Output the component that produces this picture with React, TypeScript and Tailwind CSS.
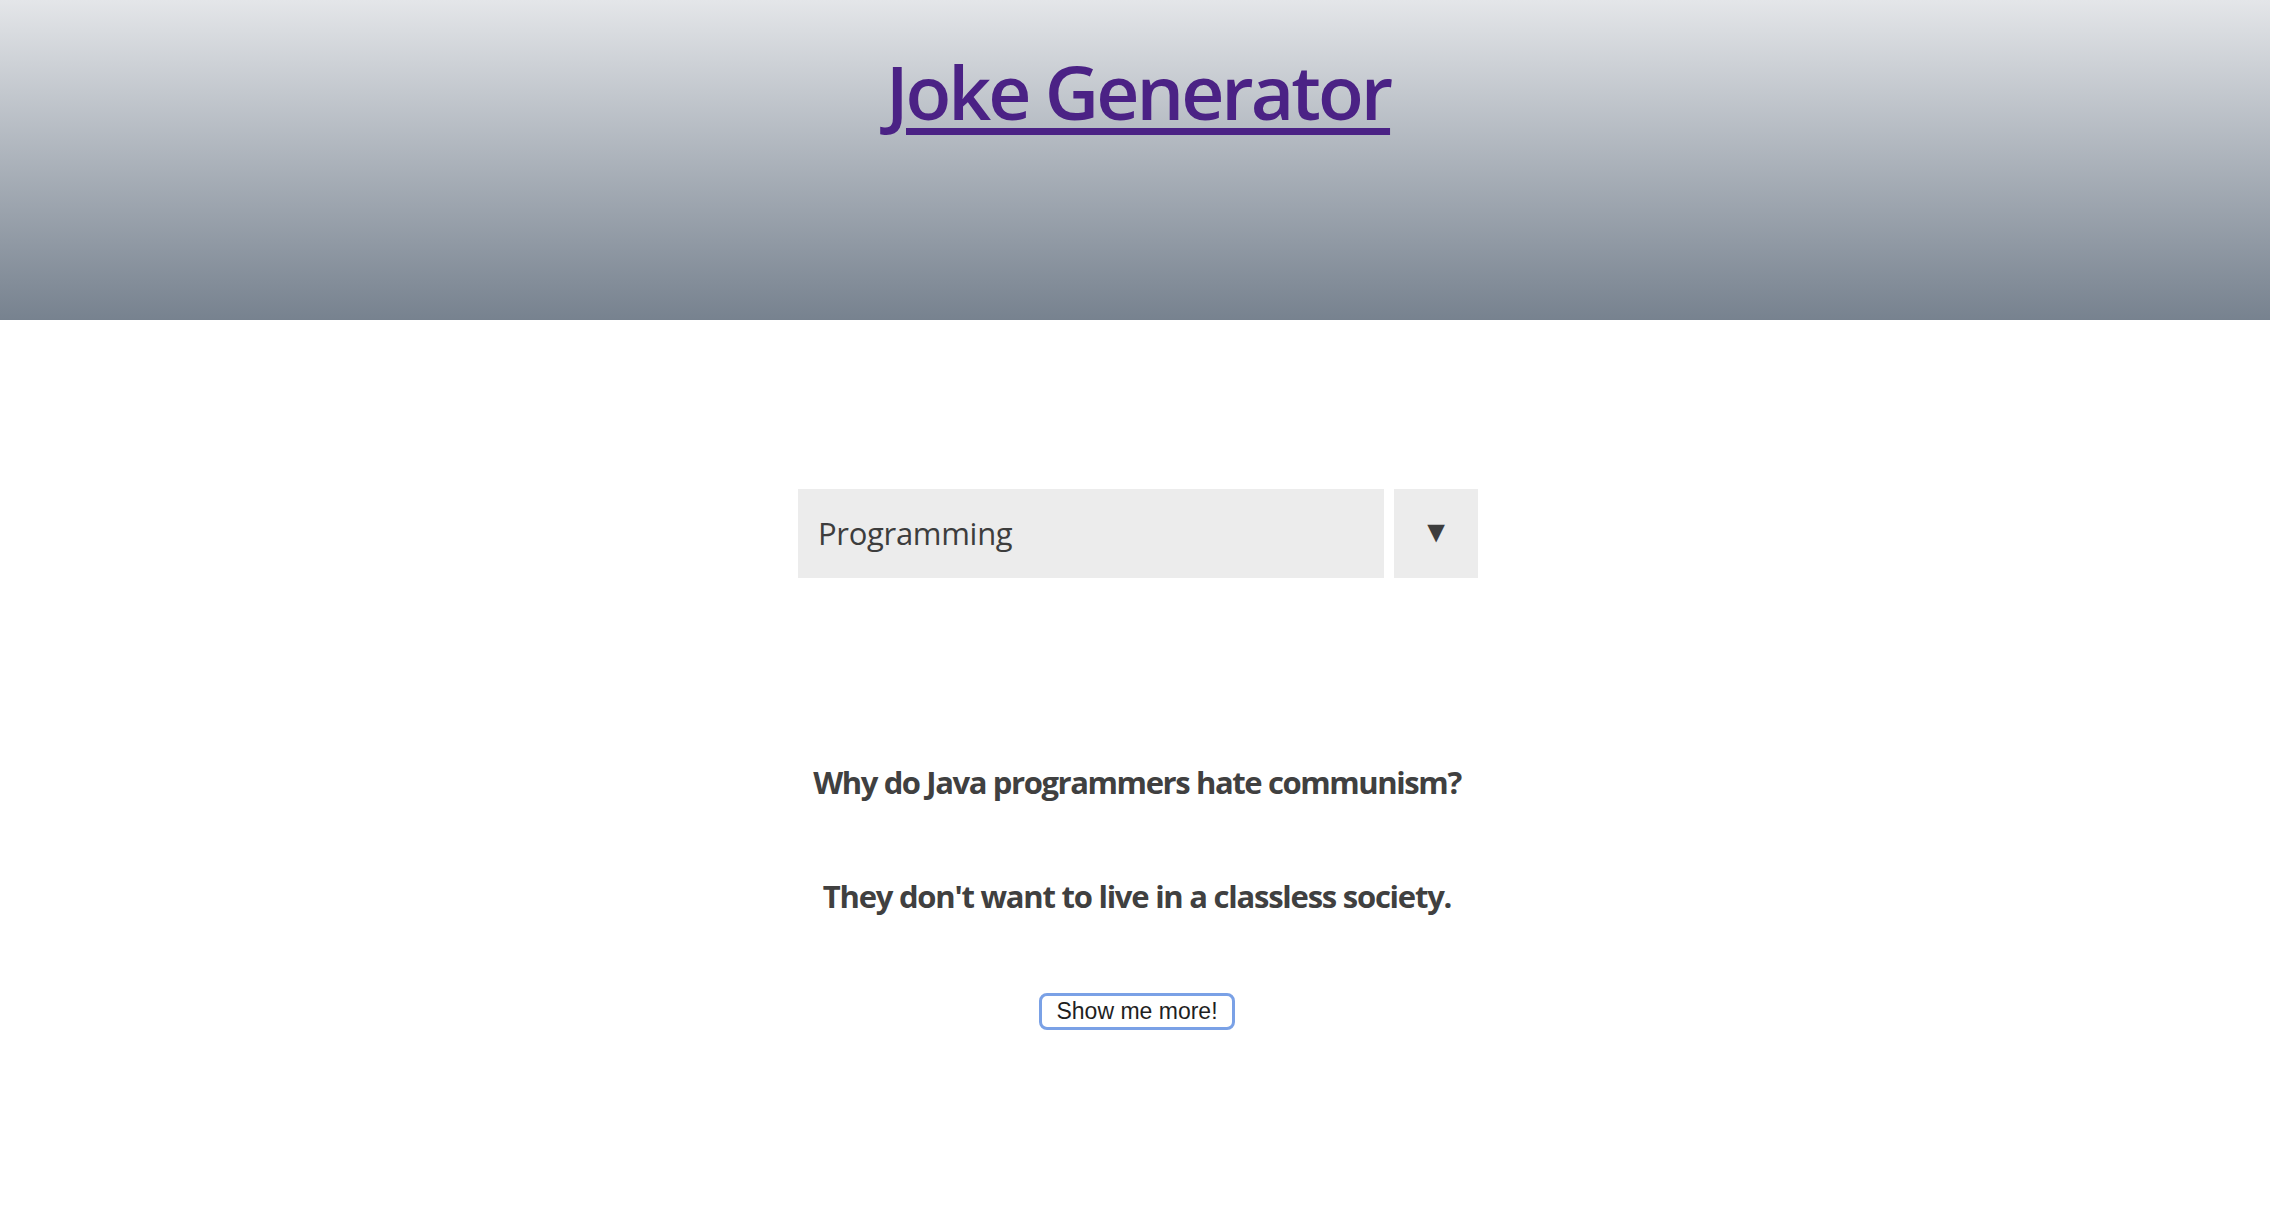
import React from "react";

export default function App() {
  return (
    <div className="min-h-screen bg-white" style={{ fontFamily: '"Open Sans", "Noto Sans", sans-serif' }}>
      <header className="h-[320px] bg-gradient-to-b from-[#e4e6e9] to-[#77828f] flex justify-center">
        <h1 className="mt-[54px] ml-[6px] text-[75px] leading-none font-semibold tracking-[-0.04em] text-[#4b2285] underline decoration-[7px] underline-offset-[8px]">
          Joke Generator
        </h1>
      </header>

      <main className="flex flex-col items-center">
        <div className="mt-[169px] ml-[6px] flex gap-[10px]">
          <div className="w-[586px] h-[89px] bg-[#ececec] flex items-center pl-[20px] text-[31px] text-[#3d3d3d] tracking-[-0.01em]">
            Programming
          </div>
          <div className="w-[84px] h-[89px] bg-[#ececec] flex items-center justify-center pb-[6px] text-[30px] text-[#3d3d3d]">
            ▼
          </div>
        </div>

        <p className="mt-[182px] ml-[4px] text-[31px] leading-[44px] font-bold text-[#404040] tracking-[-0.045em]">
          Why do Java programmers hate communism?
        </p>
        <p className="mt-[70px] ml-[4px] text-[31px] leading-[44px] font-bold text-[#404040] tracking-[-0.04em]">
          They don't want to live in a classless society.
        </p>

        <button
          className="mt-[75px] ml-[4px] h-[37px] px-[14px] rounded-[8px] border-[3px] border-[#7aa1e6] bg-white text-[23px] leading-none text-[#1f1f1f]"
          style={{ fontFamily: '"Liberation Sans", Arial, sans-serif' }}
        >
          Show me more!
        </button>
      </main>
    </div>
  );
}
